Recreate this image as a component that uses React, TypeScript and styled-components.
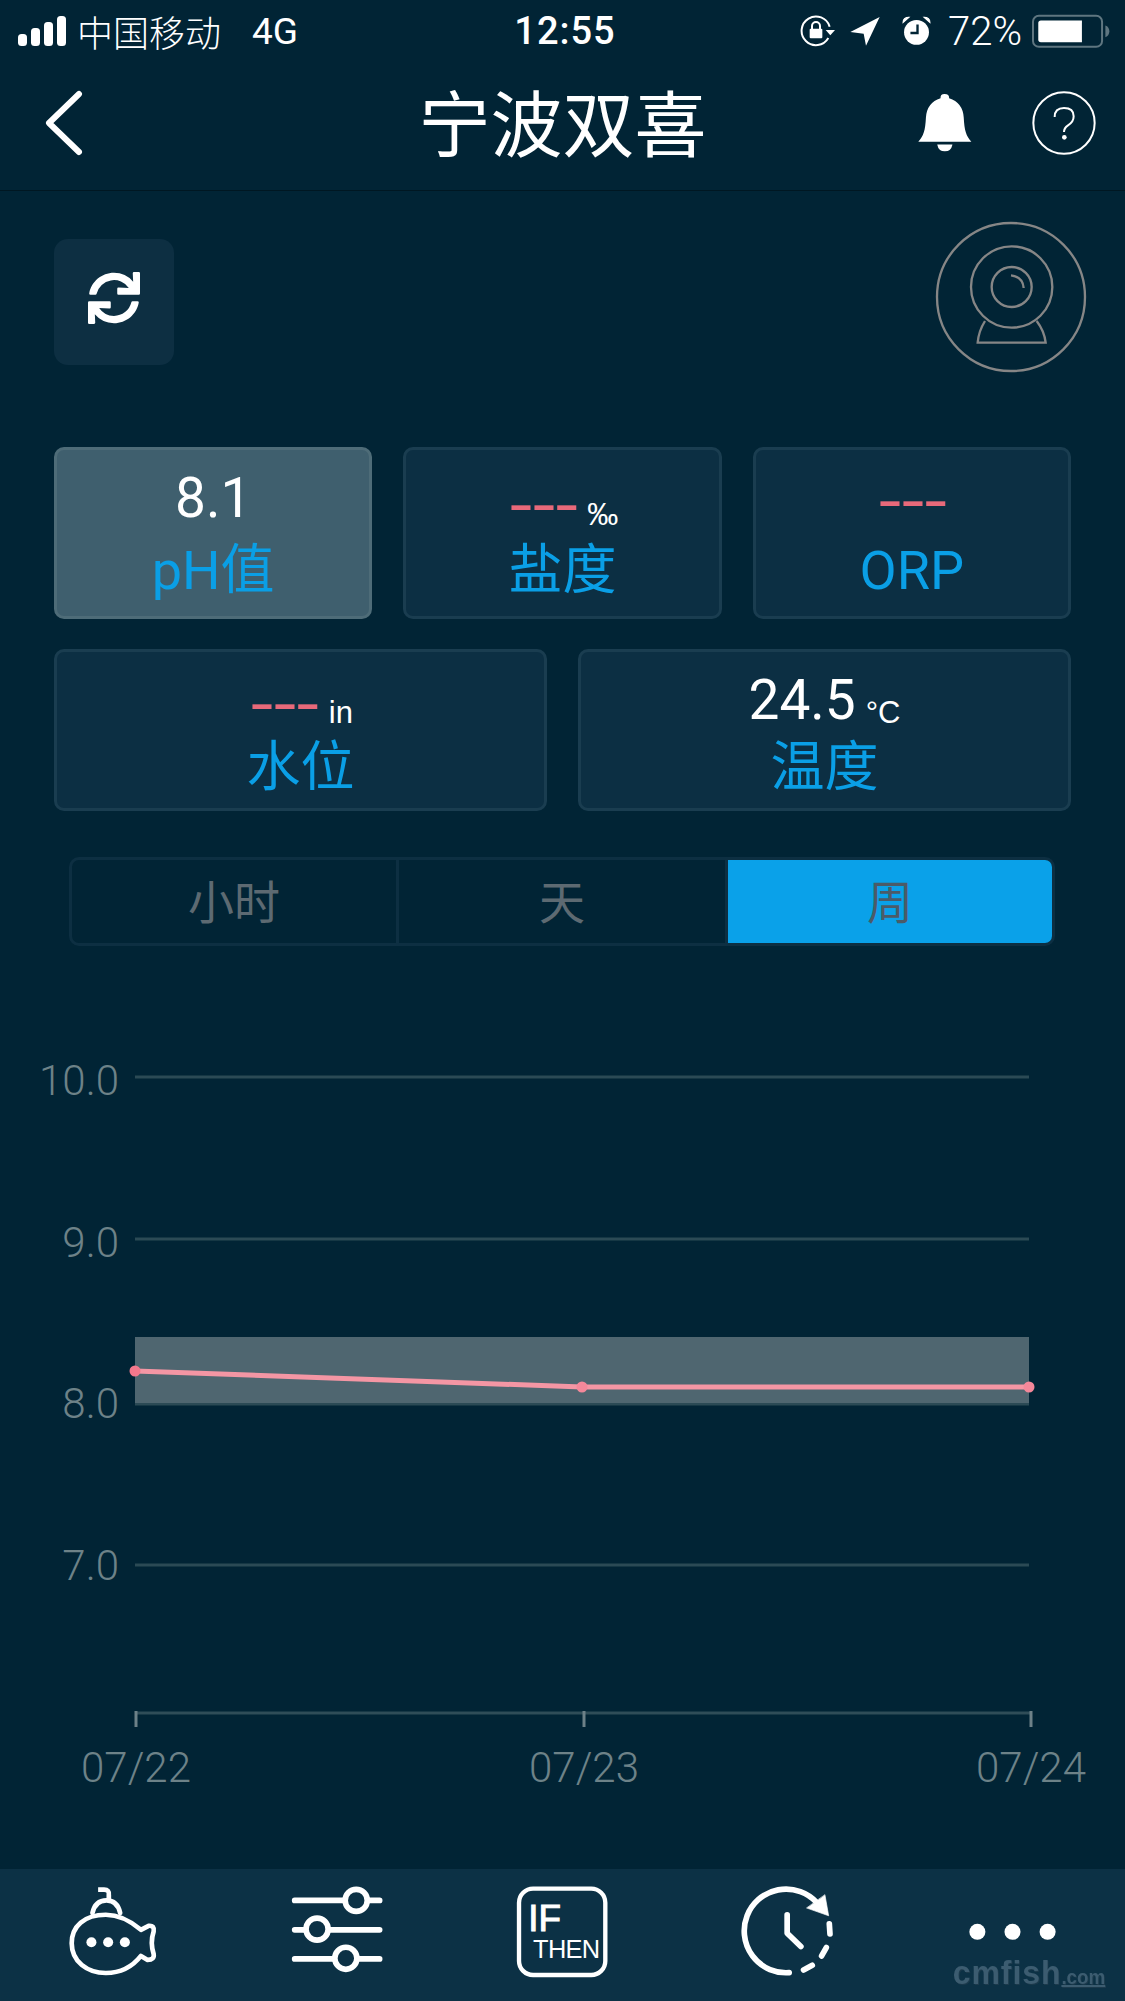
import React from "react";
import styled, { createGlobalStyle } from "styled-components";
import { FaSync } from "react-icons/fa";

const sans = `"Roboto", "Noto Sans CJK SC", sans-serif`;
const cjk = `"Noto Sans CJK SC", "Roboto", sans-serif`;

const Global = createGlobalStyle`
  html, body { margin: 0; padding: 0; background: #012435; }
  * { box-sizing: border-box; }
`;

const Page = styled.div`
  width: 1125px;
  height: 2001px;
  display: flex;
  flex-direction: column;
  background: #012435;
  color: #fff;
  font-family: ${sans};
  font-weight: 300;
  overflow: hidden;
`;

const StatusBar = styled.div`
  height: 62px;
  display: grid;
  grid-template-columns: 1fr auto 1fr;
  align-items: center;
  padding: 0 15px 0 18px;
  font-size: 34px;
`;
const StatusLeft = styled.div`
  display: flex;
  align-items: center;
  gap: 11px;
`;
const Carrier = styled.span`
  font-family: ${cjk};
  font-size: 36px;
  line-height: 62px;
`;
const Network = styled.span`
  margin-left: 20px;
  font-size: 37px;
  font-weight: 400;
`;
const Clock = styled.span`
  margin-left: 2px;
  font-size: 38px;
  font-weight: 500;
  letter-spacing: 1px;
`;
const StatusRight = styled.div`
  display: flex;
  align-items: center;
  justify-content: flex-end;
  gap: 14px;
`;
const Percent = styled.span`
  font-size: 40px;
  margin: 0 -4px 0 2px;
`;

const Header = styled.header`
  height: 129px;
  display: grid;
  grid-template-columns: 1fr auto 1fr;
  align-items: center;
  padding: 0 35px 6px;
  border-bottom: 1px solid #001722;
`;
const BackButton = styled.div`
  display: flex;
  margin-left: 9px;
`;
const Title = styled.h1`
  margin: 0 0 6px;
  font-family: ${cjk};
  font-weight: 400;
  font-size: 72px;
  line-height: 1;
`;
const HeaderActions = styled.div`
  display: flex;
  justify-content: flex-end;
  align-items: center;
  gap: 58px;
  margin-right: -7px;
`;

const TopRow = styled.div`
  display: flex;
  justify-content: space-between;
  align-items: flex-start;
  padding: 25px 35px 0 54px;
`;
const RefreshButton = styled.div`
  width: 120px;
  height: 126px;
  margin-top: 23px;
  padding-bottom: 7px;
  border-radius: 14px;
  background: #0d2f42;
  display: flex;
  align-items: center;
  justify-content: center;
`;

const Cards = styled.div`
  padding: 66px 54px 0;
  display: flex;
  flex-direction: column;
  gap: 30px;
`;
const CardRow = styled.div<{ $cols: number }>`
  display: grid;
  grid-template-columns: repeat(${(p) => p.$cols}, 1fr);
  gap: 31px;
`;
const Card = styled.div<{ $active?: boolean; $tall?: boolean }>`
  height: ${(p) => (p.$tall ? 172 : 162)}px;
  padding-top: 17px;
  border: 3px solid ${(p) => (p.$active ? "#4e6c78" : "#1a3d50")};
  border-radius: 10px;
  background: ${(p) => (p.$active ? "#3f5f6e" : "#0c2f43")};
  display: flex;
  flex-direction: column;
  align-items: center;
`;
const ValueLine = styled.div`
  height: 62px;
  display: flex;
  align-items: flex-end;
  justify-content: center;
  gap: 10px;
`;
const Value = styled.span`
  font-size: 55px;
  line-height: 62px;
  font-weight: 400;
`;
const Dashes = styled.span<{ $drop: number }>`
  display: inline-block;
  margin: ${(p) => p.$drop}px 9px 0;
  font-family: "Liberation Sans", sans-serif;
  font-size: 60px;
  line-height: 50px;
  letter-spacing: -2.4px;
  color: #e8697a;
  transform: scaleX(1.3);
  align-self: flex-start;
`;
const Unit = styled.span<{ $drop?: number }>`
  font-family: "Liberation Sans", sans-serif;
  font-size: 31px;
  line-height: 36px;
  font-weight: 400;
  margin-bottom: ${(p) => -(p.$drop ?? 0)}px;
`;
const Label = styled.div<{ $tall?: boolean }>`
  margin-top: ${(p) => (p.$tall ? 6 : 1)}px;
  font-size: 54px;
  line-height: 72px;
  font-weight: 400;
  color: #0a9fe6;
`;

const Segment = styled.div`
  margin: 46px 70px 0 69px;
  height: 90px;
  display: grid;
  grid-template-columns: 327px 329px 1fr;
  border: 3px solid #0d2f42;
  border-radius: 10px;
  overflow: hidden;
`;
const SegmentItem = styled.div<{ $active?: boolean }>`
  display: flex;
  align-items: center;
  justify-content: center;
  padding-bottom: 4px;
  font-family: ${cjk};
  font-weight: 400;
  font-size: 46px;
  color: ${(p) => (p.$active ? "#4b5b68" : "#5d6a72")};
  background: ${(p) => (p.$active ? "#0aa1e9" : "transparent")};
  border-right: ${(p) => (p.$active ? "none" : "3px solid #0d2f42")};
`;

const ChartArea = styled.div`
  flex: 1;
  display: flex;
`;

const TabBar = styled.nav`
  position: relative;
  height: 132px;
  background: #0c3145;
  display: grid;
  grid-template-columns: repeat(5, 1fr);
  justify-items: center;
  padding-top: 14px;
`;
const Watermark = styled.span`
  position: absolute;
  right: 20px;
  bottom: 10px;
  font-family: "Liberation Sans", sans-serif;
  font-weight: 700;
  font-size: 34px;
  line-height: 28px;
  letter-spacing: 1px;
  color: #3c5c70;
  text-shadow: 1px 1px 0 #1c3a4c;
  transform: scaleX(0.94);
  transform-origin: right;
`;
const WatermarkSmall = styled.span`
  font-size: 20px;
  letter-spacing: 0;
  text-decoration: underline;
`;

const Signal = () => (
  <svg width="48" height="30" viewBox="0 0 48 30" fill="#fff">
    <rect x="0" y="18" width="9" height="12" rx="3.5" />
    <rect x="13" y="12" width="9" height="18" rx="3.5" />
    <rect x="26" y="6" width="9" height="24" rx="3.5" />
    <rect x="39" y="0" width="9" height="30" rx="3.5" />
  </svg>
);

const RotationLock = () => (
  <svg width="36" height="34" viewBox="24 40 108 102" fill="none" stroke="#fff">
    <path d="M116 78 A 43 43 0 1 0 112 112" strokeWidth="6" />
    <path d="M104 88 H132 L118 104 Z" fill="#fff" stroke="none" />
    <rect x="56" y="84" width="38" height="29" rx="3" fill="#fff" stroke="none" />
    <path d="M63 86 V76 A 12 12 0 0 1 87 76 V86" strokeWidth="6" />
  </svg>
);

const Location = () => (
  <svg width="32" height="32" viewBox="184 44 96 96" fill="#fff">
    <path d="M276 50 L188 95 L228 100 L235 136 Z" />
  </svg>
);

const AlarmWrap = styled.span`
  display: flex;
  margin-left: 6px;
`;
const Alarm = () => (
  <AlarmWrap>
    <svg width="31" height="34" viewBox="332 44 92 94">
      <circle cx="378" cy="95" r="37" fill="#fff" />
      <path d="M338 66 Q 338 50 356 50 Z M418 66 Q 418 50 400 50 Z" fill="#fff" stroke="#fff" strokeWidth="3" />
      <path d="M381 72 V97 H360" fill="none" stroke="#012435" strokeWidth="7" />
    </svg>
  </AlarmWrap>
);

const Battery = () => (
  <svg width="78" height="34" viewBox="726 38 236 102">
    <rect x="729" y="43" width="209" height="94" rx="18" fill="none" stroke="#5f7680" strokeWidth="6" />
    <path d="M753 57 H877 V123 H753 Q745 123 745 115 V65 Q745 57 753 57 Z" fill="#fff" />
    <path d="M948 72 Q 960 76 960 90 Q 960 104 948 108 Z" fill="#5f7680" />
  </svg>
);

const Back = () => (
  <svg width="40" height="66" viewBox="0 0 40 66" fill="none">
    <path d="M35 4 L5 33 L35 62" stroke="#fff" strokeWidth="6" strokeLinecap="round" strokeLinejoin="round" />
  </svg>
);

const Bell = () => (
  <svg width="57" height="63" viewBox="375 270 170 190" fill="#fff">
    <path d="M460 279 Q 475 279 474 292 Q 515 305 518 350 C 520 390 525 405 541 423 H 381 C 397 405 402 390 404 350 Q 407 305 448 292 Q 447 279 460 279 Z" />
    <path d="M438 431 H 484 Q 480 452 461 452 Q 442 452 438 431 Z" />
  </svg>
);

const Help = () => (
  <svg width="66" height="66" viewBox="719 266 198 198" fill="none" stroke="#fff">
    <circle cx="818" cy="365" r="92" strokeWidth="6" />
    <path d="M790 347 Q 790 320 818 320 Q 847 320 847 345 Q 847 362 830 372 Q 818 380 818 392" strokeWidth="6" />
    <circle cx="819" cy="408" r="7" fill="#fff" stroke="none" />
  </svg>
);

const Camera = () => (
  <svg width="160" height="165" viewBox="0 0 480 495" fill="none" stroke="#868686" strokeWidth="7">
    <circle cx="243" cy="243" r="222" />
    <circle cx="245" cy="213" r="122" />
    <circle cx="245" cy="213" r="60" />
    <path d="M243 178 Q 278 182 281 216" />
    <path d="M165 315 Q 146 345 143 380 H 347 Q 343 345 320 315" />
  </svg>
);

const Chart = () => {
  const grid = "#2b4a55";
  const labelColor = "#6d8288";
  const yLabels: [string, number, number][] = [
    ["10.0", 1077, 1095],
    ["9.0", 1239, 1257],
    ["8.0", 1404, 1418],
    ["7.0", 1565, 1580],
  ];
  const xs = [135, 583, 1030];
  return (
    <svg width="1125" height="923" viewBox="0 946 1125 923" fontFamily={sans} fontWeight="300">
      {yLabels.map(([t, y, b]) => (
        <g key={t}>
          <line x1="135" x2="1029" y1={y} y2={y} stroke={grid} strokeWidth="3" />
          <text x="119" y={b} textAnchor="end" fontSize="42" fill={labelColor}>{t}</text>
        </g>
      ))}
      <rect x="135" y="1337" width="894" height="66" fill="#4f6670" />
      <line x1="135" x2="1031" y1="1713" y2="1713" stroke="#2f4d58" strokeWidth="3" />
      {xs.map((x, i) => (
        <g key={x}>
          <line x1={x + 1} x2={x + 1} y1="1711" y2="1727" stroke="#6d8188" strokeWidth="3" />
          <text x={x + 1} y="1782" textAnchor="middle" fontSize="42" fill={labelColor}>{`07/${22 + i}`}</text>
        </g>
      ))}
      <polyline points="135,1371 582,1387 1029,1387" fill="none" stroke="#f496a4" strokeWidth="5" />
      <circle cx="135" cy="1371" r="5.5" fill="#f4788c" />
      <circle cx="582" cy="1387" r="5.5" fill="#f4889a" />
      <circle cx="1029" cy="1387" r="5.5" fill="#f4889a" />
    </svg>
  );
};

const Sub = () => (
  <svg width="97" height="97" viewBox="45 10 290 290" fill="none" stroke="#fff" strokeWidth="14" strokeLinecap="round">
    <path d="M275 150 C 240 120 205 105 170 105 C 105 105 68 140 68 190 C 68 245 115 279 170 279 C 215 279 250 260 275 228 L 295 240 Q 316 240 313 222 Q 302 188 313 155 Q 316 136 298 138 Z" strokeLinejoin="round" />
    <path d="M130 100 Q 138 62 172 62 Q 205 62 213 100" />
    <path d="M147 30 H165 Q181 30 179 46 V62" strokeLinecap="butt" />
    <g fill="#fff" stroke="none">
      <circle cx="127" cy="187" r="15" />
      <circle cx="177" cy="187" r="15" />
      <circle cx="227" cy="187" r="15" />
    </g>
  </svg>
);

const Sliders = () => (
  <svg width="97" height="97" viewBox="720 10 290 290" stroke="#fff" strokeWidth="17" strokeLinecap="round">
    <path d="M737 62 H991 M737 150 H991 M737 237 H991" />
    <g fill="#0c3145">
      <circle cx="921" cy="62" r="33" />
      <circle cx="804" cy="148" r="33" />
      <circle cx="890" cy="235" r="33" />
    </g>
  </svg>
);

const IfThen = () => (
  <svg width="97" height="97" viewBox="45 10 290 290" fontFamily={`"Liberation Sans", sans-serif`} fill="#fff">
    <rect x="60" y="27" width="258" height="258" rx="42" fill="none" stroke="#fff" strokeWidth="13" />
    <text x="88" y="155" fontSize="110" stroke="#fff" strokeWidth="3">IF</text>
    <text x="102" y="235" fontSize="76" letterSpacing="-2">THEN</text>
  </svg>
);

const ClockHistory = () => (
  <svg width="97" height="97" viewBox="718 10 290 290" fill="none" stroke="#fff" strokeWidth="17" strokeLinecap="round" strokeLinejoin="round">
    <path d="M950 68 A 125 125 0 1 0 868 278" />
    <path d="M975 46 L986 108 L921 85 Z" fill="#fff" strokeWidth="2" />
    <path d="M988 132 L990 162 M979 203 L965 228 M937 256 L911 270" />
    <path d="M862 105 V160 L903 200" />
  </svg>
);

const More = () => (
  <svg width="97" height="97" viewBox="725 10 290 290" fill="#fff">
    <circle cx="765" cy="156" r="24" />
    <circle cx="870" cy="156" r="24" />
    <circle cx="975" cy="156" r="24" />
  </svg>
);

export default function App() {
  return (
    <Page>
      <Global />
      <StatusBar>
        <StatusLeft>
          <Signal />
          <Carrier>中国移动</Carrier>
          <Network>4G</Network>
        </StatusLeft>
        <Clock>12:55</Clock>
        <StatusRight>
          <RotationLock />
          <Location />
          <Alarm />
          <Percent>72%</Percent>
          <Battery />
        </StatusRight>
      </StatusBar>

      <Header>
        <BackButton><Back /></BackButton>
        <Title>宁波双喜</Title>
        <HeaderActions>
          <Bell />
          <Help />
        </HeaderActions>
      </Header>

      <TopRow>
        <RefreshButton>
          <FaSync size={52} color="#fff" />
        </RefreshButton>
        <Camera />
      </TopRow>

      <Cards>
        <CardRow $cols={3}>
          <Card $active $tall>
            <ValueLine><Value>8.1</Value></ValueLine>
            <Label $tall>pH值</Label>
          </Card>
          <Card $tall>
            <ValueLine><Dashes $drop={11}>---</Dashes><Unit $drop={4}>‰</Unit></ValueLine>
            <Label $tall>盐度</Label>
          </Card>
          <Card $tall>
            <ValueLine><Dashes $drop={7}>---</Dashes></ValueLine>
            <Label $tall>ORP</Label>
          </Card>
        </CardRow>
        <CardRow $cols={2}>
          <Card>
            <ValueLine><Dashes $drop={8}>---</Dashes><Unit>in</Unit></ValueLine>
            <Label>水位</Label>
          </Card>
          <Card>
            <ValueLine><Value>24.5</Value><Unit>°C</Unit></ValueLine>
            <Label>温度</Label>
          </Card>
        </CardRow>
      </Cards>

      <Segment>
        <SegmentItem>小时</SegmentItem>
        <SegmentItem>天</SegmentItem>
        <SegmentItem $active>周</SegmentItem>
      </Segment>

      <ChartArea>
        <Chart />
      </ChartArea>

      <TabBar>
        <Sub />
        <Sliders />
        <IfThen />
        <ClockHistory />
        <More />
        <Watermark>cmfish<WatermarkSmall>.com</WatermarkSmall></Watermark>
      </TabBar>
    </Page>
  );
}
